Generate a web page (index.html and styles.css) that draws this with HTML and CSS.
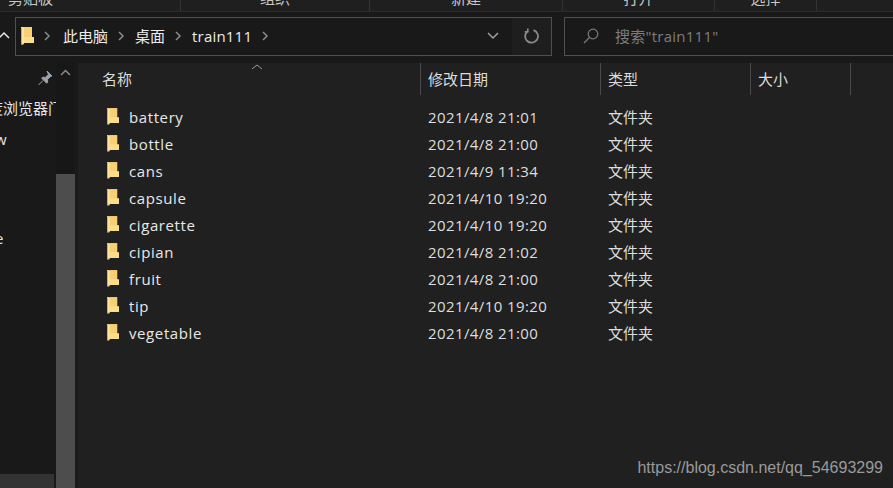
FILE: index.html
```html
<!DOCTYPE html>
<html lang="zh-CN">
<head>
<meta charset="utf-8">
<title>train111</title>
<link rel="stylesheet" href="styles.css">
</head>
<body>
<svg class="defs" width="0" height="0" aria-hidden="true">
  <symbol id="folder" viewBox="0 0 13 18">
    <path d="M0 0h11v10h2v6H3v1l-2 1-1-1z" fill="#fcd77d"/>
    <path d="M3 0h8v10H3z" fill="#f7cf75"/>
    <path d="M0 0l1 0 2 1v15H2v1l-2 0z" fill="#fbe3a0"/>
    <path d="M0 1h1v15l1 1H0z" fill="#dca83f"/>
    <path d="M3 10h10v6H3z" fill="#fddc8a"/>
  </symbol>
</svg>
<div class="ribbon">
  <div class="tab t1"><span>剪贴板</span></div>
  <div class="tab t2"><span>组织</span></div>
  <div class="tab t3"><span>新建</span></div>
  <div class="tab t4"><span>打开</span></div>
  <div class="tab t5"><span>选择</span></div>
</div>
<div class="addressrow">
  <svg class="up" width="15" height="38" viewBox="0 0 15 38"><path d="M-1 21l5-5 5 5" fill="none" stroke="#e8e8e8" stroke-width="1.5"/></svg>
  <div class="address">
    <svg class="addr-folder"><use href="#folder"/></svg>
    <svg class="crumb"><path d="M1 1l4 4-4 4" fill="none" stroke="#8a8a8a" stroke-width="1.5"/></svg>
    <span class="crumbtext">此电脑</span>
    <svg class="crumb"><path d="M1 1l4 4-4 4" fill="none" stroke="#8a8a8a" stroke-width="1.5"/></svg>
    <span class="crumbtext">桌面</span>
    <svg class="crumb"><path d="M1 1l4 4-4 4" fill="none" stroke="#8a8a8a" stroke-width="1.5"/></svg>
    <span class="crumbtext latin">train111</span>
    <svg class="crumb"><path d="M1 1l4 4-4 4" fill="none" stroke="#8a8a8a" stroke-width="1.5"/></svg>
    <div class="addr-tools">
      <svg class="chev" width="12" height="8" viewBox="0 0 12 8"><path d="M1 1l5 5 5-5" fill="none" stroke="#a0a0a0" stroke-width="1.5"/></svg>
      <div class="refresh">
        <svg width="16" height="16" viewBox="0 0 16 16"><path d="M9.500 2.200A6.400 6.400 0 1 1 4 3" fill="none" stroke="#8a8a8a" stroke-width="1.800"/><path d="M3 .5h1.600v4H.8V3H3z" fill="#8a8a8a"/></svg>
      </div>
    </div>
  </div>
  <div class="search">
    <svg width="16" height="16" viewBox="0 0 16 16"><circle cx="10" cy="6" r="4.800" fill="none" stroke="#7a7a7a" stroke-width="1.200"/><path d="M6.500 9.500L1 15" stroke="#7a7a7a" stroke-width="1.300"/></svg>
    <span>搜索"train111"</span>
  </div>
</div>
<div class="main">
  <nav class="nav">
    <div class="nav-list">
      <div class="nav-top">
        <svg width="16" height="16" viewBox="0 0 16 16"><path d="M10 1l5 5-1.500.5-3 3 .2 2.800-1 .9-5-5 .9-1 2.800.2 3-3zM6 10.500L1.500 15" fill="#9aa3ab" stroke="#9aa3ab"/></svg>
      </div>
      <div class="nav-item n1">度浏览器门</div>
      <div class="nav-item n2">w</div>
      <div class="nav-item n3">e</div>
      <div class="nav-bottom"></div>
    </div>
    <div class="scrollbar">
      <svg width="19" height="22" viewBox="0 0 19 22"><path d="M5 12l4.500-4.500L14 12" fill="none" stroke="#8a8a8a" stroke-width="1.500"/></svg>
      <div class="thumb"></div>
    </div>
    <div class="splitter"></div>
  </nav>
  <section class="files">
    <svg class="sort" width="12" height="6" viewBox="0 0 12 6"><path d="M1 5l5-4 5 4" fill="none" stroke="#9a9a9a"/></svg>
    <div class="head">
      <div class="col">名称</div>
      <div class="col">修改日期</div>
      <div class="col">类型</div>
      <div class="col">大小</div>
    </div>
    <div class="rows">
      <div class="row"><span class="name"><svg class="ficon"><use href="#folder"/></svg>battery</span><span class="date">2021/4/8 21:01</span><span>文件夹</span></div>
      <div class="row"><span class="name"><svg class="ficon"><use href="#folder"/></svg>bottle</span><span class="date">2021/4/8 21:00</span><span>文件夹</span></div>
      <div class="row"><span class="name"><svg class="ficon"><use href="#folder"/></svg>cans</span><span class="date">2021/4/9 11:34</span><span>文件夹</span></div>
      <div class="row"><span class="name"><svg class="ficon"><use href="#folder"/></svg>capsule</span><span class="date">2021/4/10 19:20</span><span>文件夹</span></div>
      <div class="row"><span class="name"><svg class="ficon"><use href="#folder"/></svg>cigarette</span><span class="date">2021/4/10 19:20</span><span>文件夹</span></div>
      <div class="row"><span class="name"><svg class="ficon"><use href="#folder"/></svg>cipian</span><span class="date">2021/4/8 21:02</span><span>文件夹</span></div>
      <div class="row"><span class="name"><svg class="ficon"><use href="#folder"/></svg>fruit</span><span class="date">2021/4/8 21:00</span><span>文件夹</span></div>
      <div class="row"><span class="name"><svg class="ficon"><use href="#folder"/></svg>tip</span><span class="date">2021/4/10 19:20</span><span>文件夹</span></div>
      <div class="row"><span class="name"><svg class="ficon"><use href="#folder"/></svg>vegetable</span><span class="date">2021/4/8 21:00</span><span>文件夹</span></div>
    </div>
    <div class="watermark">https://blog.csdn.net/qq_54693299</div>
  </section>
</div>
</body>
</html>
```
FILE: styles.css
```css
* { box-sizing: border-box; }
html, body { margin: 0; height: 100%; }
body {
  width: 893px;
  height: 488px;
  overflow: hidden;
  background: #202020;
  color: #e6e6e6;
  font: 15px/20px "Open Sans", "Noto Sans CJK SC", sans-serif;
  display: flex;
  flex-direction: column;
}
.defs { position: absolute; }

.ribbon {
  height: 12px;
  flex: none;
  display: flex;
  overflow: hidden;
  background: #1f1f1f;
  border-bottom: 1px solid #2b2b2b;
}
.tab {
  height: 11px;
  display: flex;
  justify-content: center;
  align-items: flex-end;
  border-right: 1px solid #333;
  color: #c8c8c8;
  line-height: 16px;
}
.tab span { margin-bottom: 5px; white-space: nowrap; flex: none; }
.t1 { width: 181px; justify-content: flex-start; padding-left: 8px; }
.t2 { width: 189px; }
.t3 { width: 193px; }
.t4 { width: 152px; }
.t5 { width: 102px; }

.addressrow {
  height: 51px;
  flex: none;
  display: flex;
  align-items: center;
  background: #191919;
  padding-bottom: 3px;
}
.up { flex: none; }
.address {
  width: 537px;
  height: 39px;
  flex: none;
  display: flex;
  align-items: center;
  border: 1px solid #505050;
  padding-left: 5px;
}
.addr-folder { width: 13px; height: 18px; flex: none; }
.crumb { width: 7px; height: 10px; flex: none; margin: 0 10px; }
.crumbtext { color: #ececec; white-space: nowrap; }
.latin { letter-spacing: .2px; }
.address .crumb:nth-of-type(2) { margin: 0 12px 0 10px; }
.addr-tools {
  margin-left: auto;
  height: 100%;
  display: flex;
  align-items: center;
}
.chev { margin-right: 13px; }
.refresh {
  width: 39px;
  height: 100%;
  background: #1e1e1e;
  display: flex;
  align-items: center;
  justify-content: center;
}
.search {
  margin-left: 12px;
  flex: 1;
  height: 39px;
  display: flex;
  align-items: center;
  gap: 16px;
  padding-left: 18px;
  border: 1px solid #505050;
  border-right: none;
  color: #7d7d7d;
  white-space: nowrap;
  letter-spacing: .25px;
}

.main {
  flex: 1;
  display: flex;
  min-height: 0;
}
.nav {
  width: 78px;
  flex: none;
  display: flex;
  background: #191919;
}
.nav-list {
  width: 56px;
  flex: none;
  display: flex;
  flex-direction: column;
  overflow: hidden;
}
.nav-top {
  height: 31px;
  display: flex;
  justify-content: flex-end;
  align-items: center;
  padding: 0 3px 1px 0;
}
.nav-item {
  white-space: nowrap;
  color: #e6e6e6;
  height: 20px;
}
.n1 { margin: 4px 0 0 -12px; }
.n2 { margin-top: 11px; margin-left: -5px; }
.n3 { margin-top: 79px; margin-left: -5px; }
.nav-bottom {
  margin-top: auto;
  height: 14px;
  width: 54px;
  background: #333;
}
.scrollbar {
  width: 19px;
  flex: none;
  display: flex;
  flex-direction: column;
  background: #171717;
}
.scrollbar svg { flex: none; }
.thumb {
  margin-top: 89px;
  flex: 1;
  background: #4d4d4d;
}
.splitter {
  width: 3px;
  flex: none;
  background: #1a1a1a;
}

.files {
  position: relative;
  flex: 1;
  min-width: 0;
  background: #202020;
}
.sort { position: absolute; left: 173px; top: 1px; }
.head {
  display: grid;
  grid-template-columns: 343px 180px 150px 100px;
  height: 32px;
}
.col {
  padding-left: 24px;
  line-height: 32px;
  color: #dcdcdc;
  border-right: 1px solid #4a4a4a;
}
.col + .col { padding-left: 7px; }
.rows { padding-top: 8px; }
.row {
  display: grid;
  grid-template-columns: 343px 180px 150px;
  height: 27px;
  align-items: center;
}
.row span { padding-left: 7px; color: #dedede; white-space: nowrap; }
.row .date { letter-spacing: .4px; }
.row .name {
  padding-left: 29px;
  display: flex;
  align-items: center;
  gap: 10px;
  color: #e8e8e8;
  letter-spacing: .6px;
}
.ficon { width: 12px; height: 17px; flex: none; margin-top: -1px; }
.watermark {
  position: absolute;
  right: 10px;
  bottom: 10px;
  font: 16px/20px "Liberation Sans", Arial, sans-serif;
  color: #9a9a9a;
}
```
